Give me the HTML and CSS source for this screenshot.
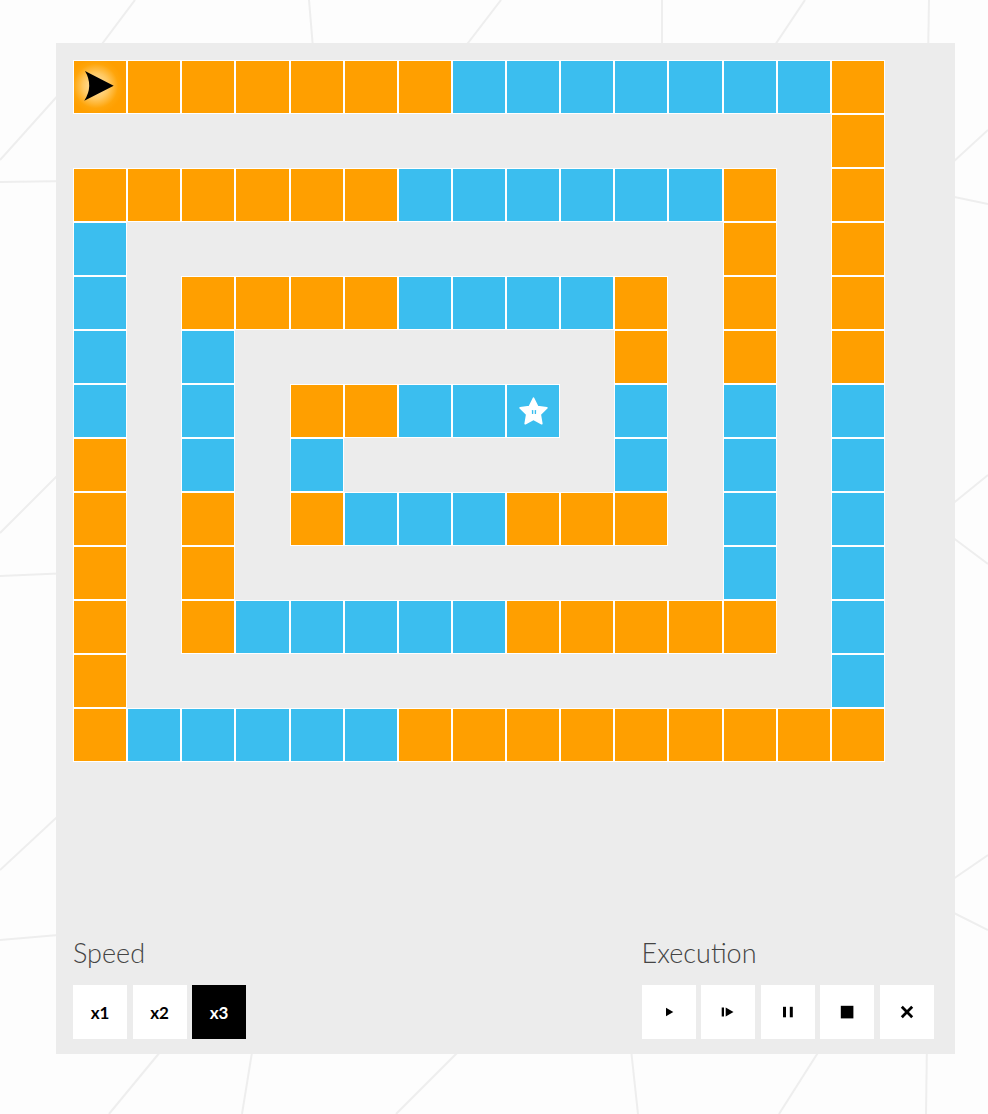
FILE: index.html
```html
<!DOCTYPE html>
<html>
<head>
<meta charset="utf-8">
<link rel="stylesheet" href="styles.css">
</head>
<body>
<svg class="bg" width="988" height="1114" viewBox="0 0 988 1114">
  <g stroke="#eeeeee" stroke-width="2" fill="none">
    <line x1="135" y1="0" x2="90" y2="60"/>
    <line x1="309" y1="0" x2="314" y2="60"/>
    <line x1="501" y1="0" x2="455" y2="60"/>
    <line x1="662" y1="0" x2="662" y2="60"/>
    <line x1="805" y1="0" x2="765" y2="60"/>
    <line x1="929" y1="0" x2="928" y2="60"/>
    <line x1="0" y1="160" x2="70" y2="82"/>
    <line x1="0" y1="182" x2="70" y2="181"/>
    <line x1="0" y1="533" x2="70" y2="463"/>
    <line x1="0" y1="576" x2="70" y2="573"/>
    <line x1="0" y1="870" x2="70" y2="805"/>
    <line x1="0" y1="940" x2="70" y2="934"/>
    <line x1="940" y1="174" x2="988" y2="130"/>
    <line x1="940" y1="194" x2="988" y2="204"/>
    <line x1="940" y1="514" x2="988" y2="475"/>
    <line x1="940" y1="528" x2="988" y2="564"/>
    <line x1="940" y1="888" x2="988" y2="855"/>
    <line x1="940" y1="906" x2="988" y2="930"/>
    <line x1="170" y1="1040" x2="109" y2="1114"/>
    <line x1="254" y1="1040" x2="242" y2="1114"/>
    <line x1="470" y1="1040" x2="396" y2="1114"/>
    <line x1="630" y1="1040" x2="638" y2="1114"/>
    <line x1="826" y1="1040" x2="779" y2="1114"/>
    <line x1="927" y1="1040" x2="926" y2="1114"/>
  </g>
</svg>
<div class="panel">
  <div class="board">
    <!-- row 0 -->
    <div class="cell o start"><svg width="52" height="52" viewBox="0 0 52 52"><path d="M11 10 L39.7 24.7 L10.3 39.7 Q19.8 25 11 10 Z" fill="#000"/></svg></div>
    <div class="cell o"></div><div class="cell o"></div><div class="cell o"></div><div class="cell o"></div><div class="cell o"></div><div class="cell o"></div>
    <div class="cell b"></div><div class="cell b"></div><div class="cell b"></div><div class="cell b"></div><div class="cell b"></div><div class="cell b"></div><div class="cell b"></div>
    <div class="cell o"></div>
    <!-- row 1 -->
    <div class="cell"></div><div class="cell"></div><div class="cell"></div><div class="cell"></div><div class="cell"></div><div class="cell"></div><div class="cell"></div>
    <div class="cell"></div><div class="cell"></div><div class="cell"></div><div class="cell"></div><div class="cell"></div><div class="cell"></div><div class="cell"></div>
    <div class="cell o"></div>
    <!-- row 2 -->
    <div class="cell o"></div><div class="cell o"></div><div class="cell o"></div><div class="cell o"></div><div class="cell o"></div><div class="cell o"></div>
    <div class="cell b"></div><div class="cell b"></div><div class="cell b"></div><div class="cell b"></div><div class="cell b"></div><div class="cell b"></div>
    <div class="cell o"></div><div class="cell"></div><div class="cell o"></div>
    <!-- row 3 -->
    <div class="cell b"></div><div class="cell"></div><div class="cell"></div><div class="cell"></div><div class="cell"></div><div class="cell"></div>
    <div class="cell"></div><div class="cell"></div><div class="cell"></div><div class="cell"></div><div class="cell"></div><div class="cell"></div>
    <div class="cell o"></div><div class="cell"></div><div class="cell o"></div>
    <!-- row 4 -->
    <div class="cell b"></div><div class="cell"></div>
    <div class="cell o"></div><div class="cell o"></div><div class="cell o"></div><div class="cell o"></div>
    <div class="cell b"></div><div class="cell b"></div><div class="cell b"></div><div class="cell b"></div>
    <div class="cell o"></div><div class="cell"></div><div class="cell o"></div><div class="cell"></div><div class="cell o"></div>
    <!-- row 5 -->
    <div class="cell b"></div><div class="cell"></div><div class="cell b"></div>
    <div class="cell"></div><div class="cell"></div><div class="cell"></div><div class="cell"></div><div class="cell"></div><div class="cell"></div><div class="cell"></div>
    <div class="cell o"></div><div class="cell"></div><div class="cell o"></div><div class="cell"></div><div class="cell o"></div>
    <!-- row 6 -->
    <div class="cell b"></div><div class="cell"></div><div class="cell b"></div><div class="cell"></div>
    <div class="cell o"></div><div class="cell o"></div>
    <div class="cell b"></div><div class="cell b"></div>
    <div class="cell b"><svg width="52" height="52" viewBox="0 0 52 52"><polygon points="26.5,13.3 30.61,21.64 39.82,22.97 33.16,29.46 34.73,38.63 26.5,34.3 18.27,38.63 19.84,29.46 13.18,22.97 22.39,21.64" fill="#fff" stroke="#fff" stroke-width="1.8" stroke-linejoin="round"/><rect x="24.9" y="25" width="1.4" height="4" rx="0.6" fill="#3bbeef"/><rect x="27.7" y="25" width="1.4" height="4" rx="0.6" fill="#3bbeef"/></svg></div>
    <div class="cell"></div><div class="cell b"></div><div class="cell"></div><div class="cell b"></div><div class="cell"></div><div class="cell b"></div>
    <!-- row 7 -->
    <div class="cell o"></div><div class="cell"></div><div class="cell b"></div><div class="cell"></div><div class="cell b"></div>
    <div class="cell"></div><div class="cell"></div><div class="cell"></div><div class="cell"></div><div class="cell"></div>
    <div class="cell b"></div><div class="cell"></div><div class="cell b"></div><div class="cell"></div><div class="cell b"></div>
    <!-- row 8 -->
    <div class="cell o"></div><div class="cell"></div><div class="cell o"></div><div class="cell"></div><div class="cell o"></div>
    <div class="cell b"></div><div class="cell b"></div><div class="cell b"></div>
    <div class="cell o"></div><div class="cell o"></div><div class="cell o"></div>
    <div class="cell"></div><div class="cell b"></div><div class="cell"></div><div class="cell b"></div>
    <!-- row 9 -->
    <div class="cell o"></div><div class="cell"></div><div class="cell o"></div>
    <div class="cell"></div><div class="cell"></div><div class="cell"></div><div class="cell"></div><div class="cell"></div><div class="cell"></div><div class="cell"></div><div class="cell"></div><div class="cell"></div>
    <div class="cell b"></div><div class="cell"></div><div class="cell b"></div>
    <!-- row 10 -->
    <div class="cell o"></div><div class="cell"></div><div class="cell o"></div>
    <div class="cell b"></div><div class="cell b"></div><div class="cell b"></div><div class="cell b"></div><div class="cell b"></div>
    <div class="cell o"></div><div class="cell o"></div><div class="cell o"></div><div class="cell o"></div><div class="cell o"></div>
    <div class="cell"></div><div class="cell b"></div>
    <!-- row 11 -->
    <div class="cell o"></div>
    <div class="cell"></div><div class="cell"></div><div class="cell"></div><div class="cell"></div><div class="cell"></div><div class="cell"></div><div class="cell"></div>
    <div class="cell"></div><div class="cell"></div><div class="cell"></div><div class="cell"></div><div class="cell"></div><div class="cell"></div>
    <div class="cell b"></div>
    <!-- row 12 -->
    <div class="cell o"></div>
    <div class="cell b"></div><div class="cell b"></div><div class="cell b"></div><div class="cell b"></div><div class="cell b"></div>
    <div class="cell o"></div><div class="cell o"></div><div class="cell o"></div><div class="cell o"></div><div class="cell o"></div><div class="cell o"></div><div class="cell o"></div><div class="cell o"></div><div class="cell o"></div>
  </div>

  <div class="controls">
    <div class="group">
      <div class="label">Speed</div>
      <div class="btns">
        <div class="btn">x1</div>
        <div class="btn">x2</div>
        <div class="btn active">x3</div>
      </div>
    </div>
    <div class="group">
      <div class="label">Execution</div>
      <div class="btns">
        <div class="btn"><svg width="16" height="16" viewBox="0 0 16 16"><path d="M5 3.7 L12.3 8 L5 12.3 Z" fill="#000"/></svg></div>
        <div class="btn"><svg width="16" height="16" viewBox="0 0 16 16"><rect x="1.7" y="3.5" width="2.3" height="9" fill="#000"/><path d="M5.7 3.5 L13.5 8 L5.7 12.5 Z" fill="#000"/></svg></div>
        <div class="btn"><svg width="16" height="16" viewBox="0 0 16 16"><rect x="3" y="2.8" width="3" height="10.5" fill="#000"/><rect x="9.8" y="2.8" width="3" height="10.5" fill="#000"/></svg></div>
        <div class="btn"><svg width="16" height="16" viewBox="0 0 16 16"><rect x="1.8" y="1.8" width="12.6" height="12.6" fill="#000"/></svg></div>
        <div class="btn"><svg width="16" height="16" viewBox="0 0 16 16"><path d="M2.8 2.8 L13.2 13.2 M13.2 2.8 L2.8 13.2" stroke="#000" stroke-width="2.8" fill="none"/></svg></div>
      </div>
    </div>
  </div>
</div>
</body>
</html>
```

FILE: styles.css
```css
html, body {
  margin: 0;
  padding: 0;
}

body {
  position: relative;
  width: 988px;
  height: 1114px;
  overflow: hidden;
  background: #fdfdfd;
  font-family: Lato, "Open Sans", "Liberation Sans", sans-serif;
}

.bg {
  position: absolute;
  top: 0;
  left: 0;
  display: block;
}

.panel {
  position: relative;
  box-sizing: border-box;
  margin: 43px 0 0 56px;
  width: 899px;
  height: 1011px;
  padding: 17px 21.5px 15px 17px;
  background: #ececec;
  display: flex;
  flex-direction: column;
}

.board {
  display: grid;
  grid-template-columns: repeat(15, 54.14px);
  grid-auto-rows: 54px;
}

.cell {
  box-sizing: border-box;
}

.cell svg {
  display: block;
}

.o {
  background: #ff9f00;
  border: 1px solid #ffffff;
}

.b {
  background: #3bbeef;
  border: 1px solid #ffffff;
}

.start {
  background: radial-gradient(circle at 42% 48%, #ffe7b8 0%, #ffc860 32%, #ffa50a 55%, #ff9f00 68%);
}

.controls {
  margin-top: auto;
  display: flex;
  justify-content: space-between;
  align-items: flex-end;
}

.label {
  font-size: 27px;
  font-weight: 300;
  line-height: 32px;
  color: #444444;
  margin-bottom: 16px;
}

.btns {
  display: flex;
  gap: 5.5px;
}

.btn {
  width: 54px;
  height: 54px;
  background: #ffffff;
  display: flex;
  align-items: center;
  justify-content: center;
  font-size: 17px;
  font-weight: 700;
  color: #000000;
}

.btn svg {
  display: block;
}

.btn.active {
  background: #000000;
  color: #ffffff;
}
```
